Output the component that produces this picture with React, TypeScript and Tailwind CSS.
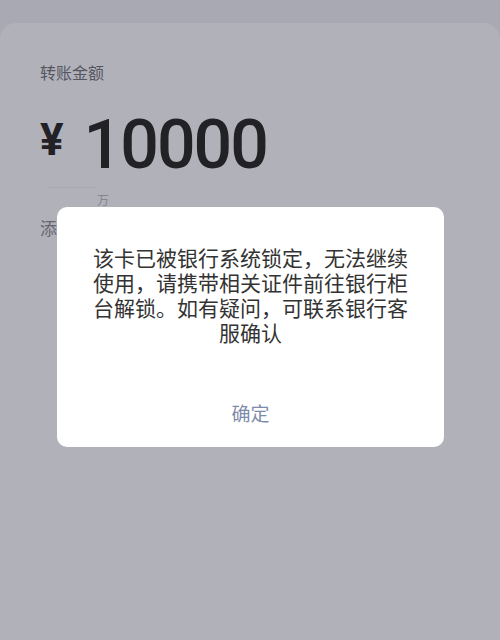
export default function App() {
  return (
    <div className="relative w-[500px] h-[640px] overflow-hidden bg-[#a9a9b3] pt-[23px] font-['Noto_Sans_CJK_SC',sans-serif]">
      <div className="h-full rounded-t-[16px] bg-[#b1b1ba] px-10 pt-[37px]">
        <p className="text-[16px] leading-[24px] text-[#55555f]">转账金额</p>

        <div className="mt-[27px] flex items-start">
          <span className="mt-[7px] text-[44px] leading-[44px] font-bold text-[#222226] font-['Roboto',sans-serif]">
            ¥
          </span>
          <span className="ml-[20px] text-[68px] leading-[68px] font-medium tracking-[-2px] text-[#222226] font-['Roboto',sans-serif]">
            10000
          </span>
        </div>

        <div className="ml-[8px] mt-[8px] h-px w-[48px] bg-[#a6a6af]" />
        <p className="ml-[57px] mt-[5px] text-[12px] leading-[14px] text-[#85858f]">万</p>

        <p className="mt-[11px] text-[17px] leading-[20px] text-[#666672]">添加转账说明</p>
      </div>

      <div className="absolute left-[57px] top-[207px] flex h-[240px] w-[387px] flex-col rounded-[10px] bg-white">
        <p className="px-[34px] pt-[38px] text-center text-[21px] leading-[25px] text-[#333333]">
          该卡已被银行系统锁定，无法继续使用，请携带相关证件前往银行柜台解锁。如有疑问，可联系银行客服确认
        </p>
        <button className="mt-auto pb-[22px] text-[19px] leading-[24px] text-[#7e8cab]">确定</button>
      </div>
    </div>
  )
}
